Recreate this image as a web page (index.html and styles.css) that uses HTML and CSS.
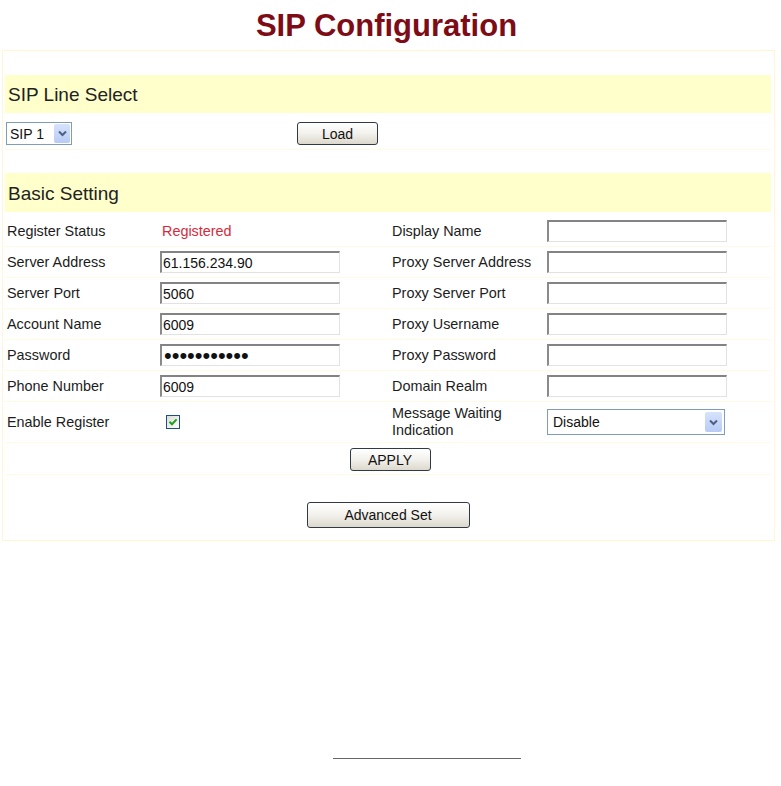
FILE: index.html
```html
<!DOCTYPE html>
<html lang="en">

<head>
    <meta charset="utf-8">
    <meta name="viewport" content="width=device-width, initial-scale=1.0">
    <title>SIP Configuration</title>
    <link rel="stylesheet" href="styles.css">
</head>

<body>
    <h1 class="title">SIP Configuration</h1>

    <section class="panel">
        <div class="bar">SIP Line Select</div>
        <div class="line-row">
            <div class="dropdown sip-select">
                <span class="dd-text">SIP 1</span>
                <span class="dd-arrow">
                    <svg width="9" height="7" viewBox="0 0 9 7"><path d="M1 1.5 L4.5 5 L8 1.5" stroke="#4d6185" stroke-width="2" fill="none"/></svg>
                </span>
            </div>
            <button class="btn load">Load</button>
        </div>

        <div class="bar basic">Basic Setting</div>
        <div class="form-grid">
            <div class="cell label">Register Status</div>
            <div class="cell status">Registered</div>
            <div class="cell label">Display Name</div>
            <div class="cell"><input class="field" type="text" value=""></div>

            <div class="cell label">Server Address</div>
            <div class="cell"><input class="field" type="text" value="61.156.234.90"></div>
            <div class="cell label">Proxy Server Address</div>
            <div class="cell"><input class="field" type="text" value=""></div>

            <div class="cell label">Server Port</div>
            <div class="cell"><input class="field" type="text" value="5060"></div>
            <div class="cell label">Proxy Server Port</div>
            <div class="cell"><input class="field" type="text" value=""></div>

            <div class="cell label">Account Name</div>
            <div class="cell"><input class="field" type="text" value="6009"></div>
            <div class="cell label">Proxy Username</div>
            <div class="cell"><input class="field" type="text" value=""></div>

            <div class="cell label">Password</div>
            <div class="cell"><input class="field pass" type="password" value="12345678901"></div>
            <div class="cell label">Proxy Password</div>
            <div class="cell"><input class="field" type="text" value=""></div>

            <div class="cell label">Phone Number</div>
            <div class="cell"><input class="field" type="text" value="6009"></div>
            <div class="cell label">Domain Realm</div>
            <div class="cell"><input class="field" type="text" value=""></div>

            <div class="cell label">Enable Register</div>
            <div class="cell">
                <svg class="check" width="14" height="14" viewBox="0 0 14 14">
                    <defs>
                        <linearGradient id="cbg" x1="0" y1="0" x2="1" y2="1">
                            <stop offset="0" stop-color="#dcdcd4"/>
                            <stop offset="1" stop-color="#ffffff"/>
                        </linearGradient>
                    </defs>
                    <rect x="0.5" y="0.5" width="13" height="13" fill="url(#cbg)" stroke="#1c5180"/>
                    <path d="M3.5 6.8 L6 9.3 L10.6 4.4" stroke="#21a121" stroke-width="2" fill="none"/>
                </svg>
            </div>
            <div class="cell label two-line">Message Waiting<br>Indication</div>
            <div class="cell">
                <div class="dropdown mwi-select">
                    <span class="dd-text">Disable</span>
                    <span class="dd-arrow">
                        <svg width="9" height="7" viewBox="0 0 9 7"><path d="M1 1.5 L4.5 5 L8 1.5" stroke="#4d6185" stroke-width="2" fill="none"/></svg>
                    </span>
                </div>
            </div>
        </div>

        <div class="apply-row"><button class="btn apply">APPLY</button></div>
        <div class="advanced-row"><button class="btn advanced">Advanced Set</button></div>
    </section>

    <div class="footer-line"></div>
</body>

</html>
```
FILE: styles.css
```css
body {
    margin: 0;
    background: #ffffff;
    font-family: "Liberation Sans", Arial, sans-serif;
    color: #1c1c1c;
}

.title {
    margin: 0;
    padding: 8px 8px 0 0;
    height: 50px;
    box-sizing: border-box;
    text-align: center;
    font-size: 31px;
    line-height: 36px;
    font-weight: bold;
    color: #7d0c16;
}

.panel {
    margin: 0 6px 0 2px;
    border: 1px solid #fff6d4;
    padding: 24px 3px 0 2px;
    height: 491px;
    box-sizing: border-box;
}

.bar {
    height: 38px;
    background: #ffffcc;
    font-size: 19px;
    line-height: 40px;
    padding-left: 3px;
    color: #222;
}

.bar.basic {
    margin-top: 23px;
    height: 39px;
    line-height: 42px;
}

.line-row {
    display: flex;
    align-items: flex-start;
    height: 37px;
    padding-top: 9px;
    box-sizing: border-box;
    border-bottom: 1px solid #fffae4;
}

.dropdown {
    display: flex;
    align-items: center;
    justify-content: space-between;
    border: 1px solid #7f9db9;
    background: #fff;
    box-sizing: border-box;
    font-size: 14px;
    color: #111;
}

.dd-text {
    padding-left: 3px;
}

.dd-arrow {
    display: flex;
    align-items: center;
    justify-content: center;
    width: 16px;
    margin: 1px;
    align-self: stretch;
    background: linear-gradient(to bottom, #d7e3fc, #b8cbf5);
    border-radius: 2px;
}

.sip-select {
    width: 66px;
    height: 23px;
    margin-left: 1px;
}

.mwi-select {
    width: 178px;
    height: 26px;
}

.mwi-select .dd-text {
    padding-left: 5px;
}

.mwi-select .dd-arrow {
    width: 17px;
    margin: 2px 2px 2px 0;
}

.btn {
    font-family: "Liberation Sans", Arial, sans-serif;
    font-size: 14px;
    color: #111;
    border: 1px solid #2f3a45;
    border-radius: 3px;
    background: linear-gradient(to bottom, #ffffff 0%, #f2f1ec 50%, #dcd8cc 100%);
    padding: 0;
    height: 23px;
    cursor: pointer;
}

.load {
    width: 81px;
    margin-left: 225px;
}

.form-grid {
    display: grid;
    grid-template-columns: 155px 230px 157px 1fr;
    grid-template-rows: repeat(6, 31px) 41px;
    margin-top: 4px;
}

.cell {
    display: flex;
    align-items: center;
    border-bottom: 1px solid #fffae4;
    font-size: 14.4px;
}

.cell.label {
    padding-left: 2px;
}

.two-line {
    line-height: 17px;
}

.status {
    color: #d42b3c;
    padding-left: 2px;
}

.field {
    width: 180px;
    height: 22px;
    box-sizing: border-box;
    border-style: solid;
    border-width: 2px 1px 1px 2px;
    border-color: #838383 #e2e2e2 #e2e2e2 #8a8a8a;
    font-family: "Liberation Sans", Arial, sans-serif;
    font-size: 14px;
    padding: 0 0 0 1px;
    color: #111;
    background: #fff;
    outline: none;
}

.pass {
    font-size: 22px;
    padding-left: 2px;
}

.check {
    margin-left: 6px;
}

.apply-row {
    display: flex;
    justify-content: center;
    height: 32px;
    padding-top: 5px;
    box-sizing: border-box;
    border-bottom: 1px solid #fffae4;
}

.apply {
    width: 81px;
    margin-left: 4px;
}

.advanced-row {
    display: flex;
    justify-content: center;
    padding-top: 27px;
}

.advanced {
    width: 163px;
    height: 26px;
}

.footer-line {
    width: 188px;
    margin: 217px 0 0 333px;
    border-top: 1px solid #666;
}
```
